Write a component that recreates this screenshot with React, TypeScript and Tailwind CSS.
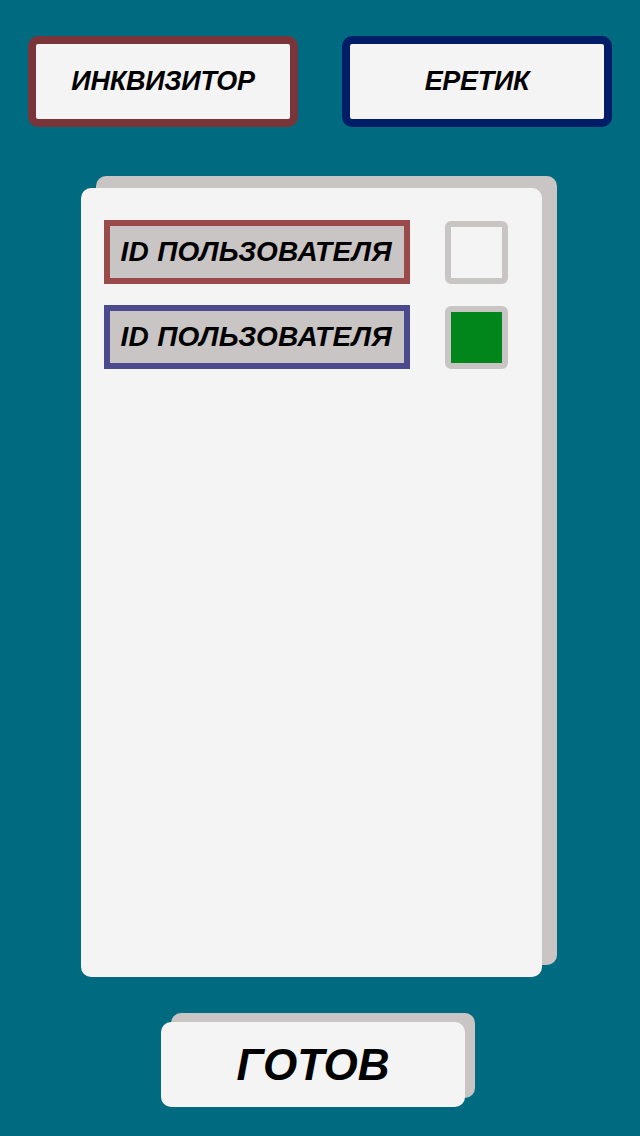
const font = { fontFamily: '"Liberation Sans", Arial, sans-serif' };

function RoleButton({ label, border }: { label: string; border: string }) {
    return (
        <button
            className={`w-[270px] h-[91px] rounded-[10px] border-[8px] ${border} bg-[#f4f4f4] flex items-center justify-center`}
        >
            <span className="text-[27px] font-bold italic text-black tracking-[-0.3px]" style={font}>{label}</span>
        </button>
    );
}

function PlayerRow({ border, checked }: { border: string; checked?: boolean }) {
    return (
        <div className="flex items-center gap-[35px]">
            <div className={`w-[306px] h-[64px] border-[6px] ${border} bg-[#c9c5c4] flex items-center pl-[11px]`}>
                <span className="text-[28px] font-bold italic text-black tracking-[0.3px]" style={font}>ID ПОЛЬЗОВАТЕЛЯ</span>
            </div>
            <div className="w-[63px] h-[63px] rounded-[6px] border-[6px] border-[#c9c5c4] bg-[#f4f4f4] flex items-center justify-center">
                {checked && <div className="w-[51px] h-[51px] bg-[#00861a]" />}
            </div>
        </div>
    );
}

export default function App() {
    return (
        <div className="w-[640px] h-[1136px] bg-[#006b80] flex flex-col items-center overflow-hidden">
            {/* Role selection */}
            <div className="flex gap-[44px] mt-[36px]">
                <RoleButton label="ИНКВИЗИТОР" border="border-[#79353a]" />
                <RoleButton label="ЕРЕТИК" border="border-[#001e68]" />
            </div>

            {/* Players list */}
            <div className="mt-[61px] w-[461px] h-[789px] ml-[-18px] rounded-[10px] bg-[#f4f4f4] shadow-[15px_-12px_0_0_#c9c5c4] pt-[32px] pl-[23px] flex flex-col gap-[21px]">
                <PlayerRow border="border-[#9a4a4a]" />
                <PlayerRow border="border-[#4a4a8c]" checked />
            </div>

            {/* Ready */}
            <button className="mt-[45px] w-[304px] h-[85px] ml-[-14px] rounded-[10px] bg-[#f4f4f4] shadow-[10px_-9px_0_0_#c9c5c4] flex items-center justify-center">
                <span className="text-[44px] font-bold italic text-black" style={font}>ГОТОВ</span>
            </button>
        </div>
    );
}
